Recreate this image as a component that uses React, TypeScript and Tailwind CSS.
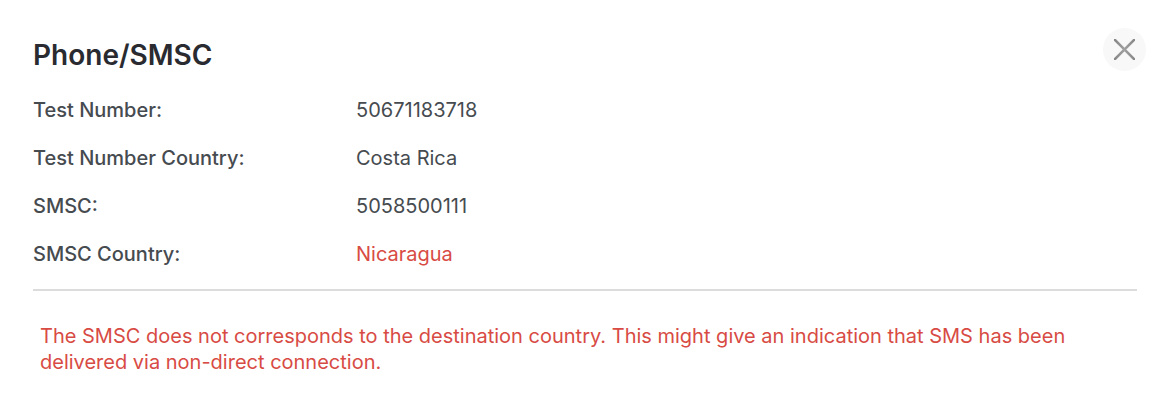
import React from 'react';

const details = [
  { label: 'Test Number:', value: '50671183718' },
  { label: 'Test Number Country:', value: 'Costa Rica' },
  { label: 'SMSC:', value: '5058500111' },
  { label: 'SMSC Country:', value: 'Nicaragua', mismatch: true },
];

const CloseIcon = () => (
  <svg
    viewBox="0 0 21 21"
    className="size-[21px] overflow-hidden"
    fill="none"
    stroke="url(#close-shade)"
    strokeWidth="2.6"
    aria-hidden="true"
  >
    <defs>
      <linearGradient
        id="close-shade"
        gradientUnits="userSpaceOnUse"
        x1="0"
        y1="0"
        x2="21"
        y2="0"
      >
        <stop offset="0" stopColor="#858585" />
        <stop offset="0.5" stopColor="#a0a0a0" />
        <stop offset="1" stopColor="#868686" />
      </linearGradient>
    </defs>
    <path d="M0 0 21 21M21 0 0 21" />
  </svg>
);

const App = () => {
  return (
    <section className="bg-white pl-[33px] pr-6 pt-7 pb-7 font-['Inter',sans-serif] text-[#464b50]">
      <header className="flex items-start justify-between">
        <h2 className="pt-[9px] text-[28px] leading-9 font-semibold text-[#292b30]">
          Phone/SMSC
        </h2>
        <button
          type="button"
          aria-label="Close"
          className="flex size-[43px] items-center justify-center rounded-full bg-[#f8f8f8] cursor-pointer"
        >
          <CloseIcon />
        </button>
      </header>

      <div className="mr-[9px] border-b-2 border-[#dcdcdc] pt-[13px] pb-[11px]">
        <dl>
          {details.map(item => (
            <div key={item.label} className="flex h-12 items-center text-xl">
              <dt className="w-[323px] shrink-0 font-medium">{item.label}</dt>
              <dd className={item.mismatch ? 'text-[#d84b44]' : ''}>
                {item.value}
              </dd>
            </div>
          ))}
        </dl>
      </div>

      <p className="px-[7px] pt-8 text-xl leading-[26px] text-[#d84b44]">
        The SMSC does not corresponds to the destination country. This might
        give an indication that SMS has been delivered via non-direct
        connection.
      </p>
    </section>
  );
};

export default App;
